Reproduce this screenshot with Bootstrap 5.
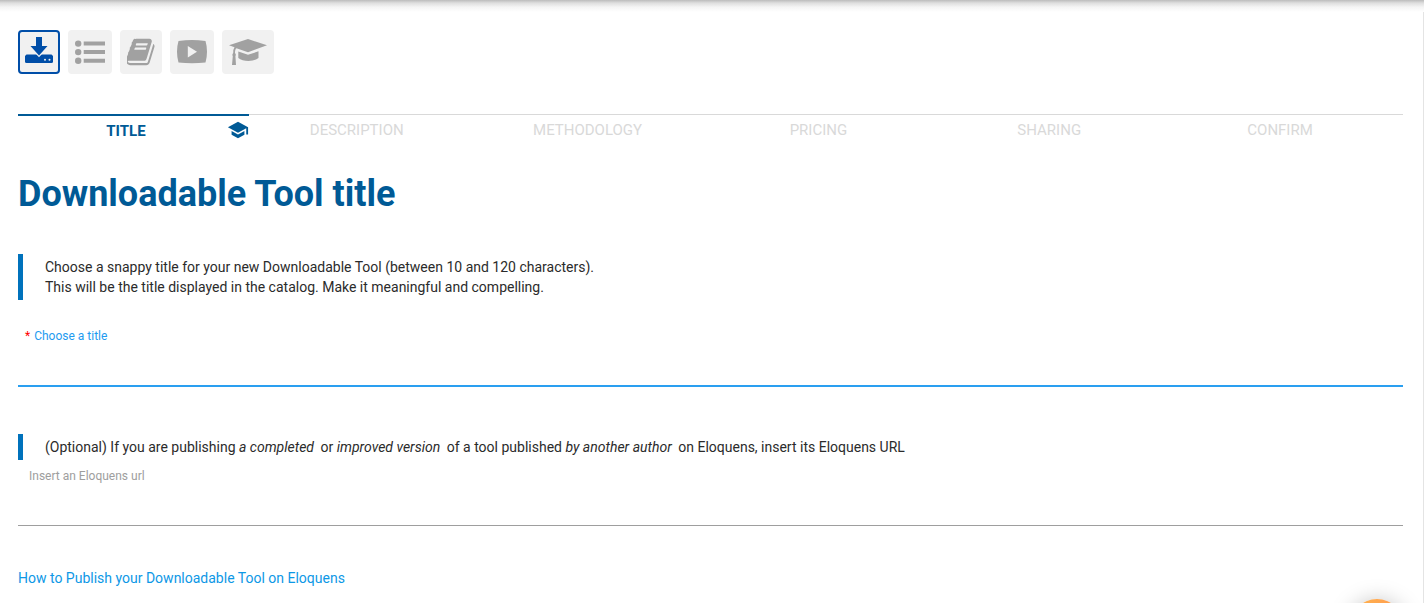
<!DOCTYPE html>
<html lang="en">
<head>
<meta charset="utf-8">
<meta name="viewport" content="width=device-width, initial-scale=1">
<title>Publish a Downloadable Tool</title>
<link href="https://cdn.jsdelivr.net/npm/bootstrap@5.3.0/dist/css/bootstrap.min.css" rel="stylesheet">
<style>
body { font-family: Roboto, "Liberation Sans", sans-serif; font-size: 14px; line-height: 20px; color: #2b2b2b; overflow: hidden; }
.page-shell { min-height: 100vh; border-right: 1px solid #e4e4e4; padding: 30px 20px 12px 18px; }
.top-shade { height: 12px; background: linear-gradient(#bcbcbc, #dedede 25%, #f5f5f5 60%, #fff); }
.kind-btn { --bs-btn-padding-x: 5px; --bs-btn-padding-y: 5px; --bs-btn-border-width: 2px; --bs-btn-border-radius: 4px; --bs-btn-bg: #f1f1f1; --bs-btn-border-color: #f1f1f1; --bs-btn-color: #a1a1a1; --bs-btn-active-bg: #f1f1f1; --bs-btn-active-border-color: #004ea8; --bs-btn-active-color: #004ea8; line-height: 0; }
.steps { margin-top: 40px; }
.step { flex: 1 1 0; border-top: 1px solid #d9d9d9; color: #d9d9d9; font-size: 15px; padding-top: 5px; text-decoration: none; }
.step.active { border-top: 2px solid #005a96; color: #005a96; font-weight: 700; }
.step-slot { width: 15px; height: 18px; }
.page-title { font-size: 36px; line-height: 40px; font-weight: 700; color: #005a96; margin: 33px 0 40px; }
.hint { border-left: 5px solid #0072bc; padding: 3px 0 3px 22px; }
.hint em { margin-right: 3px; }
.field-label { display: block; font-size: 12px; color: #9e9e9e; padding-left: 11px; }
.field-label.required { color: #1e9bf0; padding-left: 7px; }
.required-mark { color: #f00; margin-right: 1px; }
.line-input { height: 40px; border: 0; border-bottom: 1px solid #9e9e9e; border-radius: 0; padding: 6px 11px; font-size: 14px; }
.line-input.current { height: 41px; border-bottom: 2px solid #2a9ff0; }
.line-input:focus { box-shadow: none; }
.gap-field { margin-top: 26px; }
.gap-tight { margin-top: 6px; }
.gap-section { margin-top: 47px; }
.gap-link { margin-top: 42px; }
.help-link { color: #0d98e6; }
.chat-btn { right: 19px; bottom: -52px; width: 56px; height: 56px; background: linear-gradient(90deg, #ffb54c, #ff9a52); box-shadow: 0 2px 22px rgba(0,0,0,.25); }
</style>
</head>
<body>
<div class="top-shade fixed-top"></div>
<main class="page-shell">
  <div class="d-flex gap-2">
    <button type="button" class="btn kind-btn active" aria-label="Downloadable tool">
      <svg width="28" height="30" fill="currentColor"><path d="M1.500 17.500h25L28 19v5.500q0 1.500-1.500 1.500h-25Q0 26 0 24.500V19z"/><path d="M11 0h6v9h5.500L14 18 5.500 9H11z" stroke="#f1f1f1" stroke-width="3"/><path d="M11 0h6v9h5.500L14 18.500 5.500 9H11z"/><circle cx="20" cy="22.700" r="1" fill="#f1f1f1"/><circle cx="24.500" cy="22.700" r="1" fill="#f1f1f1"/></svg>
    </button>
    <button type="button" class="btn kind-btn" aria-label="List">
      <svg width="30" height="30" fill="currentColor"><circle cx="3.200" cy="6.600" r="3.200"/><circle cx="3.200" cy="15.100" r="3.200"/><circle cx="3.200" cy="23.700" r="3.200"/><path d="M8.700 4.600H30v4H8.700zM8.700 13.100H30v4H8.700zM8.700 21.700H30v4H8.700z"/></svg>
    </button>
    <button type="button" class="btn kind-btn" aria-label="Book">
      <svg width="28" height="30" fill="currentColor"><path transform="translate(-1.100 -.4) scale(.0172)" d="M1639 478q40 57 18 129l-275 906q-19 64-76.500 107.500t-122.500 43.500h-923q-77 0-148.500-53.500t-99.500-131.500q-24-67-2-127 0-4 3-27t4-37q1-8-3-21.500t-3-19.500q2-11 8-21t16.500-23.500 16.500-23.500q23-38 45-91.500t30-91.500q3-10 .5-30t-.5-28q3-11 17-28t17-23q21-36 42-92t25-90q1-9-2.500-32t.5-28q4-13 22-30.500t22-22.500q19-26 42.500-84.500t27.500-96.500q1-8-3-25.500t-2-26.500q2-8 9-18t18-23 17-21q8-12 16.500-30.500t15-35 16-36 19.500-32 26.500-23.500 36-11.500 47.500 5.500l-1 3q38-9 51-9h761q74 0 114 56t18 130l-274 906q-36 119-71.500 153.500t-128.500 34.500h-869q-27 0-38 15-11 16-1 43 24 70 144 70h923q29 0 56-15.500t35-41.500l300-987q7-22 5-57 38 15 59 43zm-1064 2q-4 13 2 22.500t20 9.500h608q13 0 25.500-9.500t16.500-22.500l21-64q4-13-2-22.500t-20-9.500h-608q-13 0-25.500 9.500t-16.500 22.500zm-83 256q-4 13 2 22.500t20 9.500h608q13 0 25.500-9.500t16.500-22.500l21-64q4-13-2-22.500t-20-9.500h-608q-13 0-25.500 9.500t-16.500 22.500z"/></svg>
    </button>
    <button type="button" class="btn kind-btn" aria-label="Video">
      <svg width="30" height="30" fill="currentColor"><path fill-rule="evenodd" d="M1.500 4Q15 2 28.500 4q1.500 5 1.500 10.700T28.500 25.500Q15 27 1.500 25.500 0 20.500 0 14.700T1.500 4zM10.800 9v11.400L20 14.700z"/></svg>
    </button>
    <button type="button" class="btn kind-btn" aria-label="Course">
      <svg width="38" height="30" fill="currentColor"><path d="M0 8.300 19 2l19 6.300L19 15.300 7.500 11.200Q6 12 6 16q1.400 1.500.4 3L7 28H3l.8-9q-1-1.500.4-3 0-4 1.300-5.700z"/><path d="m9.300 14.500 9.700 3.300 10.500-3.500V21q-3.500 3-10 3t-10.200-3z"/></svg>
    </button>
  </div>

  <nav class="steps d-flex text-center" aria-label="Steps">
    <a href="#" class="step active d-flex" aria-current="step"><span class="flex-fill">TITLE</span><span class="step-slot d-flex justify-content-end align-items-center"><svg class="flex-shrink-0" width="22" height="22" viewBox="0 0 24 24" fill="currentColor"><path d="M5 13.180v4L12 21l7-3.820v-4L12 17l-7-3.820zM12 3L1 9l11 6 9-4.910V17h2V9L12 3z"/></svg></span></a>
    <a href="#" class="step d-flex"><span class="flex-fill">DESCRIPTION</span><span class="step-slot"></span></a>
    <a href="#" class="step d-flex"><span class="flex-fill">METHODOLOGY</span><span class="step-slot"></span></a>
    <a href="#" class="step d-flex"><span class="flex-fill">PRICING</span><span class="step-slot"></span></a>
    <a href="#" class="step d-flex"><span class="flex-fill">SHARING</span><span class="step-slot"></span></a>
    <a href="#" class="step d-flex"><span class="flex-fill">CONFIRM</span><span class="step-slot"></span></a>
  </nav>

  <h1 class="page-title">Downloadable Tool title</h1>

  <form>
    <p class="hint mb-0">Choose a snappy title for your new Downloadable Tool (between 10 and 120 characters).<br>This will be the title displayed in the catalog. Make it meaningful and compelling.</p>
    <div class="gap-field">
      <label class="field-label required" for="tool-title"><span class="required-mark">*</span> Choose a title</label>
      <input type="text" class="form-control line-input current" id="tool-title" maxlength="120">
    </div>
    <p class="hint gap-section mb-0">(Optional) If you are publishing <em>a completed</em> or <em>improved version</em> of a tool published <em>by another author</em> on Eloquens, insert its Eloquens URL</p>
    <div class="gap-tight">
      <label class="field-label" for="tool-url">Insert an Eloquens url</label>
      <input type="url" class="form-control line-input" id="tool-url">
    </div>
  </form>

  <p class="gap-link mb-0"><a href="#" class="help-link text-decoration-none">How to Publish your Downloadable Tool on Eloquens</a></p>
</main>
<button type="button" class="btn chat-btn position-fixed rounded-circle border-0" aria-label="Open chat"></button>
<script src="https://cdn.jsdelivr.net/npm/bootstrap@5.3.0/dist/js/bootstrap.bundle.min.js"></script>
</body>
</html>
